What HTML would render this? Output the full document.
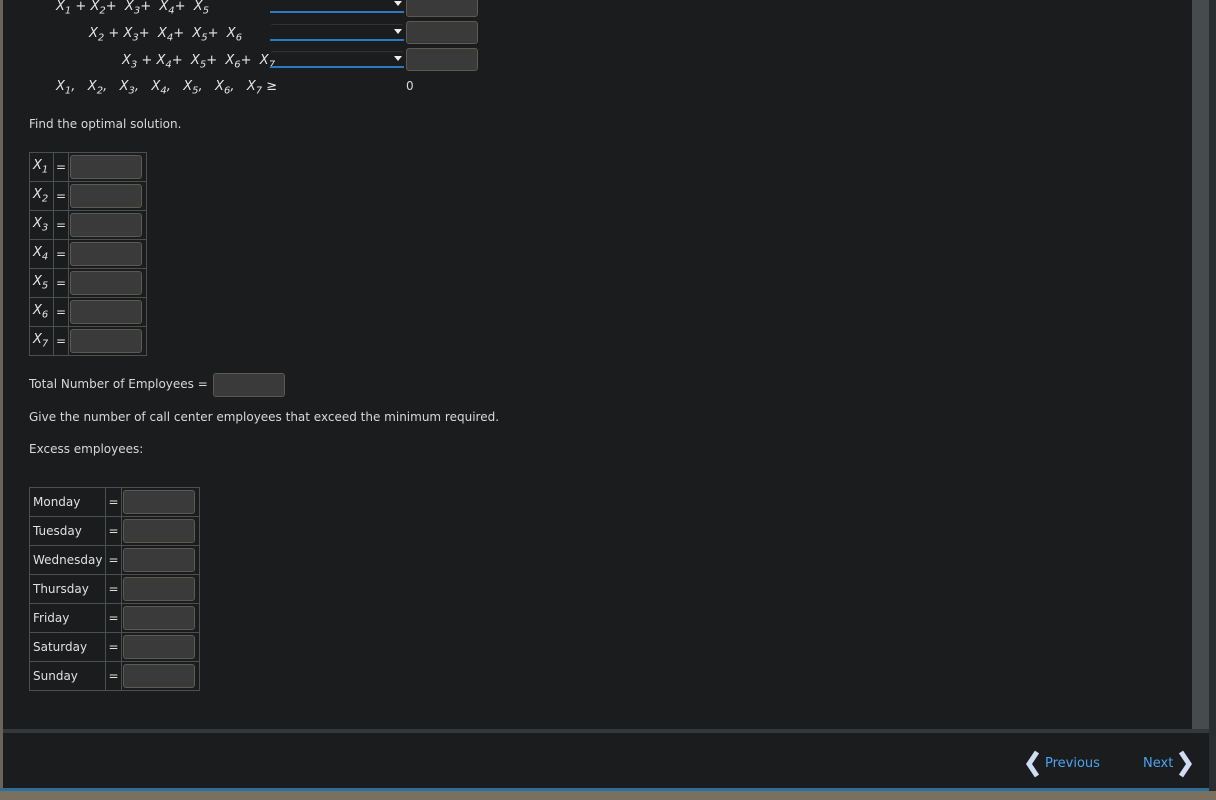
<!DOCTYPE html>
<html><head><style>
body{margin:0;width:1216px;height:800px;background:#1b1c1e;position:relative;overflow:hidden;font-family:"DejaVu Sans",Verdana,sans-serif;font-size:12px;color:#d8d8d8}
.a{position:absolute}
.m{font-family:"DejaVu Sans",sans-serif;font-style:italic;font-size:13px;white-space:pre;color:#e6e6e6}
.m sub{font-size:10px}
.sel{position:absolute;left:270px;width:134px;height:14px;border-bottom:2px solid #2a7ac0;border-top:1px solid #333;border-radius:3px 3px 0 0}
.sel:after{content:"";position:absolute;right:2px;top:4px;border-left:4px solid transparent;border-right:4px solid transparent;border-top:5px solid #eee}
.inp{position:absolute;left:406px;width:70px;height:21px;background:#3a3a3a;border:1px solid #5d5850;border-radius:3px}
table{position:absolute;border-collapse:collapse;border:1px solid #4a4f52}
td{border:1px solid #4a4f52;height:29px;padding:0 3px;font-size:12px;color:#e0e0e0;box-sizing:border-box}
td.e{padding:0 2px;text-align:center;width:14px}
td.i{padding:0 1px;width:78px}
.bx{width:70px;height:22px;background:#3a3a3a;border:1px solid #5d5850;border-radius:3px}
</style></head><body>
<div class="a" style="left:0;top:0;width:3px;height:790px;background:#6a635b"></div>
<div class="a" style="left:1192px;top:0;width:17px;height:729px;background:#464b4d"></div>
<div class="a" style="left:1209px;top:0;width:7px;height:800px;background:#2a2e30"></div>
<div class="a" style="left:3px;top:729px;width:1206px;height:4px;background:#34383a"></div>
<div class="a" style="left:0;top:788px;width:1209px;height:3px;background:#2a6e9c"></div>
<div class="a" style="left:0;top:791px;width:1216px;height:9px;background:#7a7060"></div>

<div class="a m" style="left:56px;top:-1px">X<sub>1</sub> + X<sub>2</sub>+  X<sub>3</sub>+  X<sub>4</sub>+  X<sub>5</sub></div>
<div class="a m" style="left:89px;top:26px">X<sub>2</sub> + X<sub>3</sub>+  X<sub>4</sub>+  X<sub>5</sub>+  X<sub>6</sub></div>
<div class="a m" style="left:122px;top:53px">X<sub>3</sub> + X<sub>4</sub>+  X<sub>5</sub>+  X<sub>6</sub>+  X<sub>7</sub></div>
<div class="a m" style="left:56px;top:79px">X<sub>1</sub>,   X<sub>2</sub>,   X<sub>3</sub>,   X<sub>4</sub>,   X<sub>5</sub>,   X<sub>6</sub>,   X<sub>7</sub> <span style="font-style:normal">≥</span></div>
<div class="sel" style="top:-4px"></div><div class="inp" style="top:-6px"></div>
<div class="sel" style="top:24px"></div><div class="inp" style="top:21px"></div>
<div class="sel" style="top:51px"></div><div class="inp" style="top:48px"></div>
<div class="a" style="left:406px;top:79px">0</div>

<div class="a" style="left:29px;top:117px">Find the optimal solution.</div>
<table style="left:29px;top:152px">
<tr><td class="m" style="width:24px">X<sub>1</sub></td><td class="e">=</td><td class="i"><div class="bx"></div></td></tr>
<tr><td class="m">X<sub>2</sub></td><td class="e">=</td><td class="i"><div class="bx"></div></td></tr>
<tr><td class="m">X<sub>3</sub></td><td class="e">=</td><td class="i"><div class="bx"></div></td></tr>
<tr><td class="m">X<sub>4</sub></td><td class="e">=</td><td class="i"><div class="bx"></div></td></tr>
<tr><td class="m">X<sub>5</sub></td><td class="e">=</td><td class="i"><div class="bx"></div></td></tr>
<tr><td class="m">X<sub>6</sub></td><td class="e">=</td><td class="i"><div class="bx"></div></td></tr>
<tr><td class="m">X<sub>7</sub></td><td class="e">=</td><td class="i"><div class="bx"></div></td></tr>
</table>
<div class="a" style="left:29px;top:377px">Total Number of Employees =</div>
<div class="bx a" style="left:213px;top:373px"></div>
<div class="a" style="left:29px;top:410px">Give the number of call center employees that exceed the minimum required.</div>
<div class="a" style="left:29px;top:442px">Excess employees:</div>
<table style="left:29px;top:487px">
<tr><td style="width:76px">Monday</td><td class="e">=</td><td class="i"><div class="bx"></div></td></tr>
<tr><td>Tuesday</td><td class="e">=</td><td class="i"><div class="bx"></div></td></tr>
<tr><td>Wednesday</td><td class="e">=</td><td class="i"><div class="bx"></div></td></tr>
<tr><td>Thursday</td><td class="e">=</td><td class="i"><div class="bx"></div></td></tr>
<tr><td>Friday</td><td class="e">=</td><td class="i"><div class="bx"></div></td></tr>
<tr><td>Saturday</td><td class="e">=</td><td class="i"><div class="bx"></div></td></tr>
<tr><td>Sunday</td><td class="e">=</td><td class="i"><div class="bx"></div></td></tr>
</table>

<svg class="a" style="left:1025px;top:750px" width="16" height="28"><path d="M12 2 L4 14 L12 26" stroke="#d0dcf4" stroke-width="5" fill="none"/></svg>
<div class="a" style="left:1045px;top:756px;color:#4aa3ef;font-size:13px">Previous</div>
<div class="a" style="left:1143px;top:756px;color:#4aa3ef;font-size:13px">Next</div>
<svg class="a" style="left:1177px;top:750px" width="16" height="28"><path d="M4 2 L12 14 L4 26" stroke="#d0dcf4" stroke-width="5" fill="none"/></svg>
</body></html>
